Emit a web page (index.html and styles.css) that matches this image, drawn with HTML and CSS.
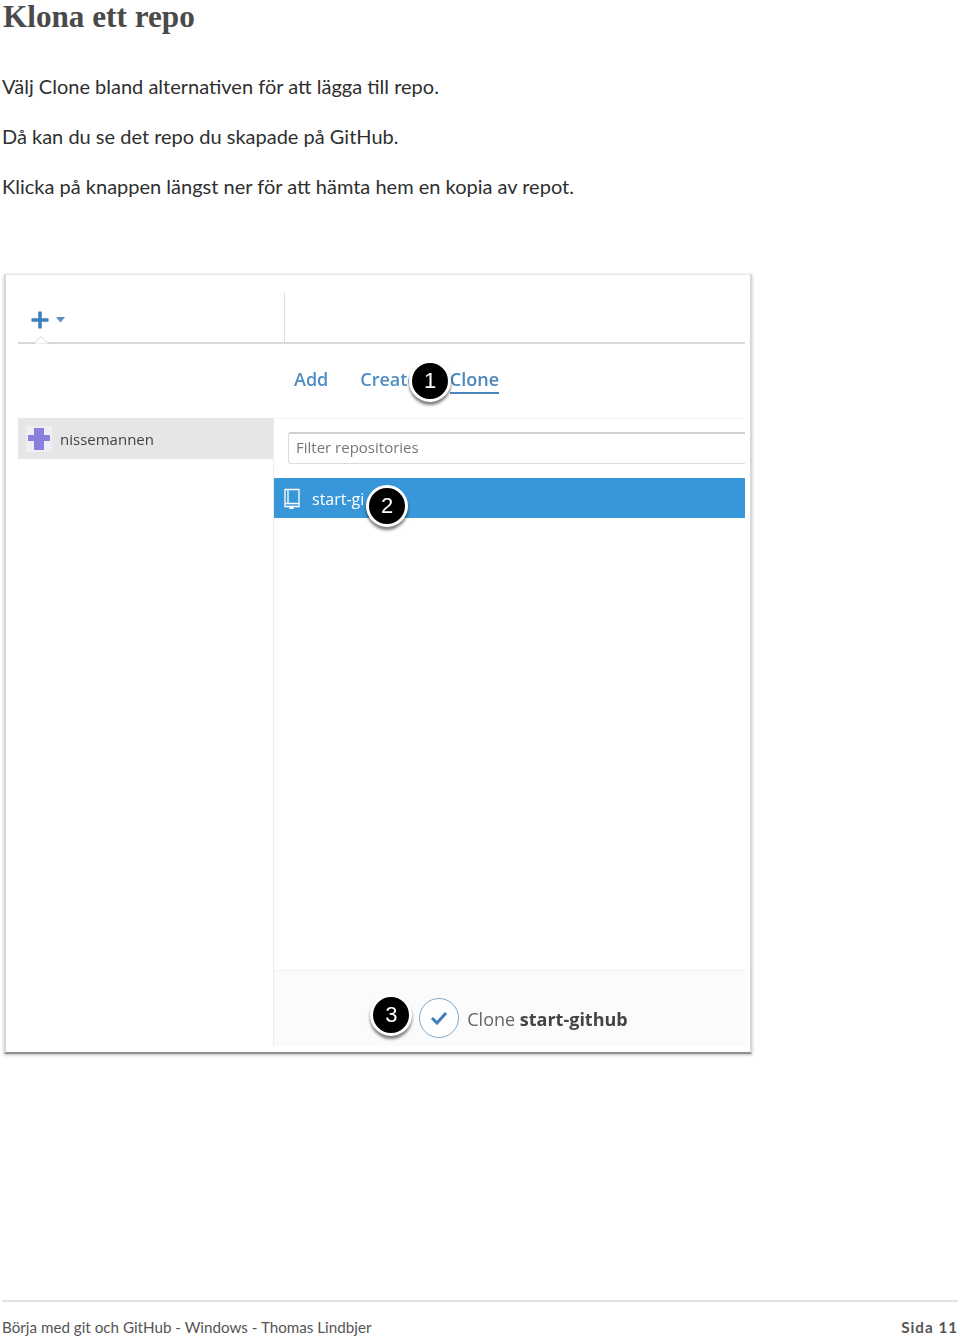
FILE: index.html
```html
<!DOCTYPE html>
<html lang="sv">
<head>
  <meta charset="UTF-8">
  <meta name="viewport" content="width=device-width, initial-scale=1.0">
  <title>Klona ett repo</title>
  <link rel="stylesheet" href="styles.css">
</head>
<body>
  <h1>Klona ett repo</h1>
  <p class="first">Välj Clone bland alternativen för att lägga till repo.</p>
  <p>Då kan du se det repo du skapade på GitHub.</p>
  <p>Klicka på knappen längst ner för att hämta hem en kopia av repot.</p>

  <div class="shot">
    <div class="toolbar">
      <div class="toolbar-left">
        <svg class="plus" width="36" height="20" viewBox="0 0 36 20">
          <path d="M9 1.500v17M0.500 10h17" stroke="#3f7fbf" stroke-width="3.600" fill="none"/>
          <path d="M25 7h9l-4.500 5.500z" fill="#5b8fc0"/>
        </svg>
      </div>
      <svg class="notch" width="26" height="9" viewBox="0 0 26 9">
        <path d="M0 8.500h6l7-7 7 7h6" stroke="#d4d4d4" stroke-width="1" fill="#fff"/>
      </svg>
    </div>

    <div class="tabs">
      <span class="tab">Add</span>
      <span class="tab">Create</span>
      <span class="tab active">Clone</span>
      <span class="badge badge-one">1</span>
    </div>

    <div class="columns">
      <div class="sidebar">
        <div class="account">
          <span class="avatar">
            <svg width="24" height="24" viewBox="0 0 24 24">
              <path d="M7 1h10v7h6v6h-6v9H7v-9H1V8h6z" fill="#8a7fdc"/>
            </svg>
          </span>
          <span class="account-name">nissemannen</span>
        </div>
      </div>
      <div class="main">
        <div class="filter">
          <div class="filter-input">Filter repositories</div>
        </div>
        <div class="repo">
          <svg width="18" height="21" viewBox="0 0 18 21">
            <path d="M2 1.500h14v14H2zM2 15.500v3h14v-3M5 1.500v14M7 18v3l1.500-1.200L10 21v-3" stroke="#fff" stroke-width="1.300" fill="none"/>
          </svg>
          <span class="repo-name">start-gi</span>
          <span class="badge badge-two">2</span>
        </div>
        <div class="spacer"></div>
        <div class="clone-bar">
          <div class="clone-action">
            <span class="badge badge-three">3</span>
            <span class="check">
              <svg width="18" height="14" viewBox="0 0 18 14">
                <path d="M2 7l5 5 9-10" stroke="#3f7fbf" stroke-width="3" fill="none"/>
              </svg>
            </span>
            <span class="clone-label">Clone <b>start-github</b></span>
          </div>
        </div>
      </div>
    </div>
  </div>

  <div class="footer">
    <span>Börja med git och GitHub - Windows - Thomas Lindbjer</span>
    <b>Sida 11</b>
  </div>
</body>
</html>
```

FILE: styles.css
```css
html, body {
  margin: 0;
  padding: 0;
}
body {
  height: 1337px;
  overflow: hidden;
  display: flex;
  flex-direction: column;
  background: #fff;
  color: #2f2f2f;
  font-family: Lato, sans-serif;
  font-size: 20px;
  padding-left: 2px;
  box-sizing: border-box;
}
h1 {
  margin: 0;
  padding-left: 1px;
  height: 37px;
  font-family: "Liberation Serif", serif;
  font-size: 31.200px;
  line-height: 33px;
  font-weight: bold;
  color: #4a4a4a;
}
p {
  margin: 0 0 26px;
  height: 24px;
  line-height: 24px;
}
p.first {
  margin-top: 37px;
}

/* bild */
.shot {
  position: relative;
  box-sizing: border-box;
  width: 748px;
  height: 780px;
  margin: 50px 0 0 2px;
  padding: 0 5px 6px 12px;
  display: flex;
  flex-direction: column;
  background: #fff;
  border: 1px solid #e4e4e4;
  border-left: 2px solid #d8d8d8;
  border-right: 2px solid #d8d8d8;
  border-bottom: 2px solid #8f8f8f;
  box-shadow: 0 1px 3px rgba(0,0,0,0.25);
  font-family: "Open Sans", sans-serif;
  color: #444;
  filter: blur(0.4px);
}
.toolbar {
  position: relative;
  height: 69px;
  flex: none;
  border-bottom: 2px solid #d9d9d9;
  box-sizing: border-box;
}
.toolbar-left {
  position: relative;
  width: 267px;
  height: 100%;
  padding: 35px 0 0 13px;
  box-sizing: border-box;
}
.toolbar-left::after {
  content: "";
  position: absolute;
  right: 0;
  top: 18px;
  bottom: 0;
  width: 1px;
  background: #dedede;
}
.plus {
  display: block;
}
.notch {
  position: absolute;
  left: 10px;
  bottom: -2px;
}
.tabs {
  position: relative;
  flex: none;
  height: 74px;
  display: flex;
  gap: 32px;
  padding: 22px 0 0 276px;
  box-sizing: border-box;
  font-size: 18px;
  font-weight: 600;
  color: #4f8cc2;
}
.tab {
  height: 26px;
  line-height: 26px;
}
.tab.active {
  color: #4a86bb;
  border-bottom: 2px solid #4a86bb;
}
.columns {
  flex: 1;
  display: flex;
  min-height: 0;
}
.sidebar {
  width: 255px;
  flex: none;
}
.account {
  height: 41px;
  display: flex;
  align-items: center;
  gap: 8px;
  padding-left: 8px;
  background: #e6e6e6;
  font-size: 15px;
  color: #444;
}
.account-name {
  padding-top: 1px;
}
.avatar {
  width: 26px;
  height: 26px;
  display: flex;
  align-items: center;
  justify-content: center;
  background: #efeff3;
}
.main {
  flex: 1;
  display: flex;
  flex-direction: column;
  border-left: 1px solid #ececec;
}
.filter {
  height: 60px;
  padding: 13px 0 0 14px;
  box-sizing: border-box;
  border-top: 1px solid #f2f2f2;
}
.filter-input {
  height: 32px;
  line-height: 27px;
  box-sizing: border-box;
  padding-left: 7px;
  border: 1px solid #dcdcdc;
  border-top: 2px solid #cfcfcf;
  border-right: 0;
  border-radius: 3px 0 0 3px;
  font-size: 15px;
  color: #777;
}
.repo {
  position: relative;
  height: 40px;
  flex: none;
  display: flex;
  align-items: center;
  gap: 11px;
  padding-left: 9px;
  background: #3797d8;
  color: #fff;
  font-size: 16px;
}
.repo-name {
  padding-top: 2px;
}
.spacer {
  flex: 1;
}
.clone-bar {
  height: 76px;
  flex: none;
  box-sizing: border-box;
  padding-top: 26px;
  background: #fbfbfb;
  border-top: 1px solid #f1f1f1;
  display: flex;
  justify-content: center;
}
.clone-action {
  position: relative;
  display: flex;
  align-items: center;
  gap: 8px;
  height: 42px;
  font-size: 18px;
  color: #666;
  margin-left: 28px;
}
.clone-label {
  padding-top: 2px;
}
.clone-action b {
  color: #444;
}
.check {
  width: 38px;
  height: 38px;
  display: flex;
  align-items: center;
  justify-content: center;
  border: 1.500px solid #7fa8c9;
  border-radius: 50%;
  background: #fff;
}
.badge {
  position: absolute;
  width: 36px;
  height: 36px;
  display: flex;
  align-items: center;
  justify-content: center;
  background: #000;
  color: #fff;
  border: 3px solid #fff;
  border-radius: 50%;
  box-shadow: 0 3px 3px rgba(0,0,0,0.5);
  font-family: "Liberation Sans", sans-serif;
  font-size: 22px;
  font-weight: normal;
}
.badge-one {
  left: 391px;
  top: 16px;
}
.badge-two {
  left: 92px;
  top: 7px;
}
.badge-three {
  left: -49px;
  top: -3px;
}
.footer {
  margin-top: auto;
  height: 37px;
  margin-right: 2px;
  box-sizing: border-box;
  border-top: 2px solid #e2e2e2;
  display: flex;
  justify-content: space-between;
  align-items: flex-end;
  font-size: 15.200px;
  line-height: 20px;
  color: #555;
  white-space: nowrap;
}
.footer b {
  letter-spacing: 1px;
}
```
